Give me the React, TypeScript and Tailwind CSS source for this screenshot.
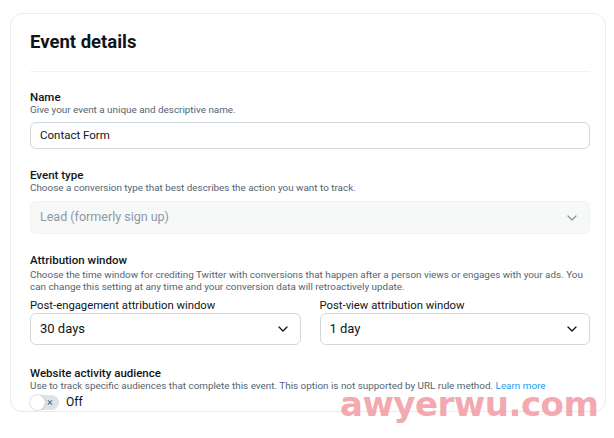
import React from 'react';

const font = { fontFamily: 'Roboto, "Noto Sans", sans-serif' };

const Chevron = ({ light }: { light?: boolean }) => (
  <svg width="10" height="6" viewBox="0 0 10 6" fill="none">
    <path
      d="M1 1l4 4 4-4"
      stroke={light ? '#8b98a5' : '#0f1419'}
      strokeWidth="1.3"
      strokeLinecap="round"
      strokeLinejoin="round"
    />
  </svg>
);

const Label = ({ children }: { children: React.ReactNode }) => (
  <div className="text-[11.5px] font-medium leading-[14px] text-[#0f1419]">{children}</div>
);

const Hint = ({ children }: { children: React.ReactNode }) => (
  <div className="text-[9.9px] leading-[12px] text-[#536471]">{children}</div>
);

const Select = ({ value, disabled }: { value: string; disabled?: boolean }) => (
  <div
    className={
      disabled
        ? 'flex h-[33px] items-center justify-between rounded-[6px] border border-[#eff3f4] bg-[#f7f9f9] pl-[9px] pr-[12px] text-[12.5px] text-[#8b98a5]'
        : 'flex h-[32px] items-center justify-between rounded-[6px] border border-[#cfd9de] bg-white pl-[9px] pr-[12px] text-[13px] text-[#0f1419]'
    }
  >
    <span>{value}</span>
    <Chevron light={disabled} />
  </div>
);

const Toggle = () => (
  <div className="relative flex h-[15px] w-[29px] items-center rounded-full bg-[#dde4e9]">
    <div className="h-[15px] w-[15px] rounded-full bg-white shadow-[0_0_2px_rgba(0,0,0,0.3)]" />
    <span className="ml-[2px] text-[11px] leading-none text-[#536471]">×</span>
  </div>
);

export default function App() {
  return (
    <div className="relative h-[438px] w-[614px] overflow-hidden bg-white" style={font}>
      <div className="ml-[10px] mt-[13px] h-[399px] w-[596px] rounded-[12px] border border-[#e6ebee] pl-[19px] pr-[15px] pt-[16px]">
        <h1 className="text-[18.5px] font-bold leading-[24px] text-[#0f1419]">Event details</h1>
        <div className="mt-[17px] border-t border-[#eff3f4]" />

        <div className="mt-[18px]">
          <Label>Name</Label>
          <Hint>Give your event a unique and descriptive name.</Hint>
          <div className="mt-[6px] flex h-[27px] items-center rounded-[6px] border border-[#cfd9de] px-[9px] text-[11.5px] text-[#0f1419]">
            Contact Form
          </div>
        </div>

        <div className="mt-[19px]">
          <Label>Event type</Label>
          <Hint>Choose a conversion type that best describes the action you want to track.</Hint>
          <div className="mt-[7px]">
            <Select value="Lead (formerly sign up)" disabled />
          </div>
        </div>

        <div className="mt-[19px]">
          <Label>Attribution window</Label>
          <div className="mt-[2px]">
            <Hint>
              Choose the time window for crediting Twitter with conversions that happen after a person views or engages
              with your ads. You can change this setting at any time and your conversion data will retroactively update.
            </Hint>
          </div>
          <div className="mt-[5px] grid grid-cols-2 gap-x-[19px]">
            <div>
              <div className="text-[11.3px] leading-[15px] text-[#0f1419]">Post-engagement attribution window</div>
              <Select value="30 days" />
            </div>
            <div>
              <div className="text-[11.3px] leading-[15px] text-[#0f1419]">Post-view attribution window</div>
              <Select value="1 day" />
            </div>
          </div>
        </div>

        <div className="mt-[21px]">
          <Label>Website activity audience</Label>
          <Hint>
            Use to track specific audiences that complete this event. This option is not supported by URL rule method.{' '}
            <span className="text-[#1d9bf0]">Learn more</span>
          </Hint>
          <div className="mt-[1px] flex items-center gap-[7px]">
            <Toggle />
            <span className="text-[12px] text-[#0f1419]">Off</span>
          </div>
        </div>
      </div>

      <div
        className="pointer-events-none absolute left-[340px] top-[391px] text-[34px] font-bold leading-[26px] tracking-[-0.5px] text-[#f2a0a7] opacity-90"
        style={{ fontFamily: '"DejaVu Sans", sans-serif' }}
      >
        awyerwu.com
      </div>
    </div>
  );
}
